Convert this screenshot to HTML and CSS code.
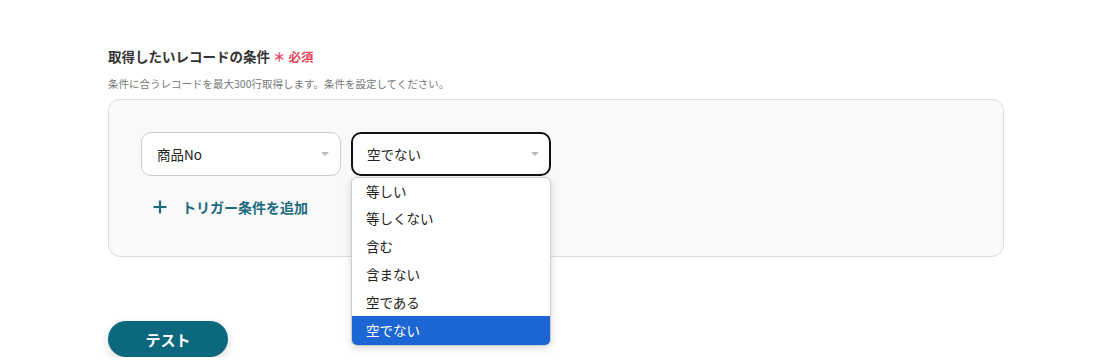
FILE: index.html
```html
<!DOCTYPE html>
<html lang="ja">
<head>
  <meta charset="UTF-8">
  <meta name="viewport" content="width=device-width, initial-scale=1.0">
  <title>トリガー条件</title>
  <link rel="stylesheet" href="styles.css">
</head>
<body>
  <div class="page">
    <div class="field-label">取得したいレコードの条件 <span class="required">＊ 必須</span></div>
    <div class="field-help">条件に合うレコードを最大300行取得します。条件を設定してください。</div>
    <div class="cond-box">
      <div class="cond-row">
        <div class="select">商品No<span class="caret"></span></div>
        <div class="select-wrap">
          <div class="select active">空でない<span class="caret"></span></div>
          <ul class="menu">
            <li>等しい</li>
            <li>等しくない</li>
            <li>含む</li>
            <li>含まない</li>
            <li>空である</li>
            <li class="selected">空でない</li>
          </ul>
        </div>
      </div>
      <div class="add-cond">
        <svg class="plus" width="14" height="14" viewBox="0 0 14 14"><path d="M7 0.5v13M0.5 7h13" stroke="currentColor" stroke-width="2.2" fill="none"/></svg>
        トリガー条件を追加
      </div>
    </div>
    <button class="test-btn">テスト</button>
  </div>
</body>
</html>
```

FILE: styles.css
```css
body { margin: 0; font-family: 'Noto Sans CJK JP', 'Noto Sans', sans-serif; color: #222; background: #fff; }
.page { padding: 46px 0 0 108px; width: 896px; }
.field-label { font-size: 13.5px; font-weight: bold; color: #333; line-height: 20px; }
.required { color: #e8445a; font-size: 12.5px; }
.field-help { font-size: 10.5px; color: #777; margin-top: 9px; line-height: 16px; }
.cond-box { margin-top: 7px; height: 158px; box-sizing: border-box; border: 1px solid #dcdde0; border-radius: 12px; background: #f9f9f9; padding: 32px 0 0 32px; }
.cond-row { display: flex; gap: 10px; }
.select-wrap { position: relative; }
.select { position: relative; width: 200px; height: 44px; box-sizing: border-box; border: 1px solid #ccc; border-radius: 10px; background: #fff; font-size: 13.5px; line-height: 42px; padding-left: 15px; }
.select.active { border: 2px solid #111; width: 200px; line-height: 40px; padding-left: 14px; }
.caret { position: absolute; right: 11px; top: 19px; width: 0; height: 0; border-left: 4px solid transparent; border-right: 4px solid transparent; border-top: 4px solid #bbb; }
.select.active .caret { right: 10px; top: 18px; }
.menu { position: absolute; left: 0; top: 45px; width: 198px; margin: 0; padding: 0; list-style: none; background: #fff; border: 1px solid #ccc; border-radius: 6px; box-shadow: 0 2px 8px rgba(0,0,0,0.15); overflow: hidden; z-index: 2; }
.menu li { font-size: 13.5px; height: 28px; line-height: 28px; padding-left: 14px; color: #222; }
.menu li:first-child { height: 26px; line-height: 26px; }
.menu li.selected { background: #1b66d2; color: #fff; height: 29px; }
.add-cond { margin: 21px 0 0 12px; font-size: 14px; font-weight: bold; color: #1d6a80; display: flex; align-items: center; }
.plus { margin-right: 15px; }
.test-btn { margin-top: 64px; width: 120px; height: 36px; border: none; border-radius: 18px; background: #0b687d; color: #fff; font-family: inherit; font-size: 15px; font-weight: bold; box-shadow: 0 3px 10px rgba(0,0,0,0.15); cursor: pointer; }
```
